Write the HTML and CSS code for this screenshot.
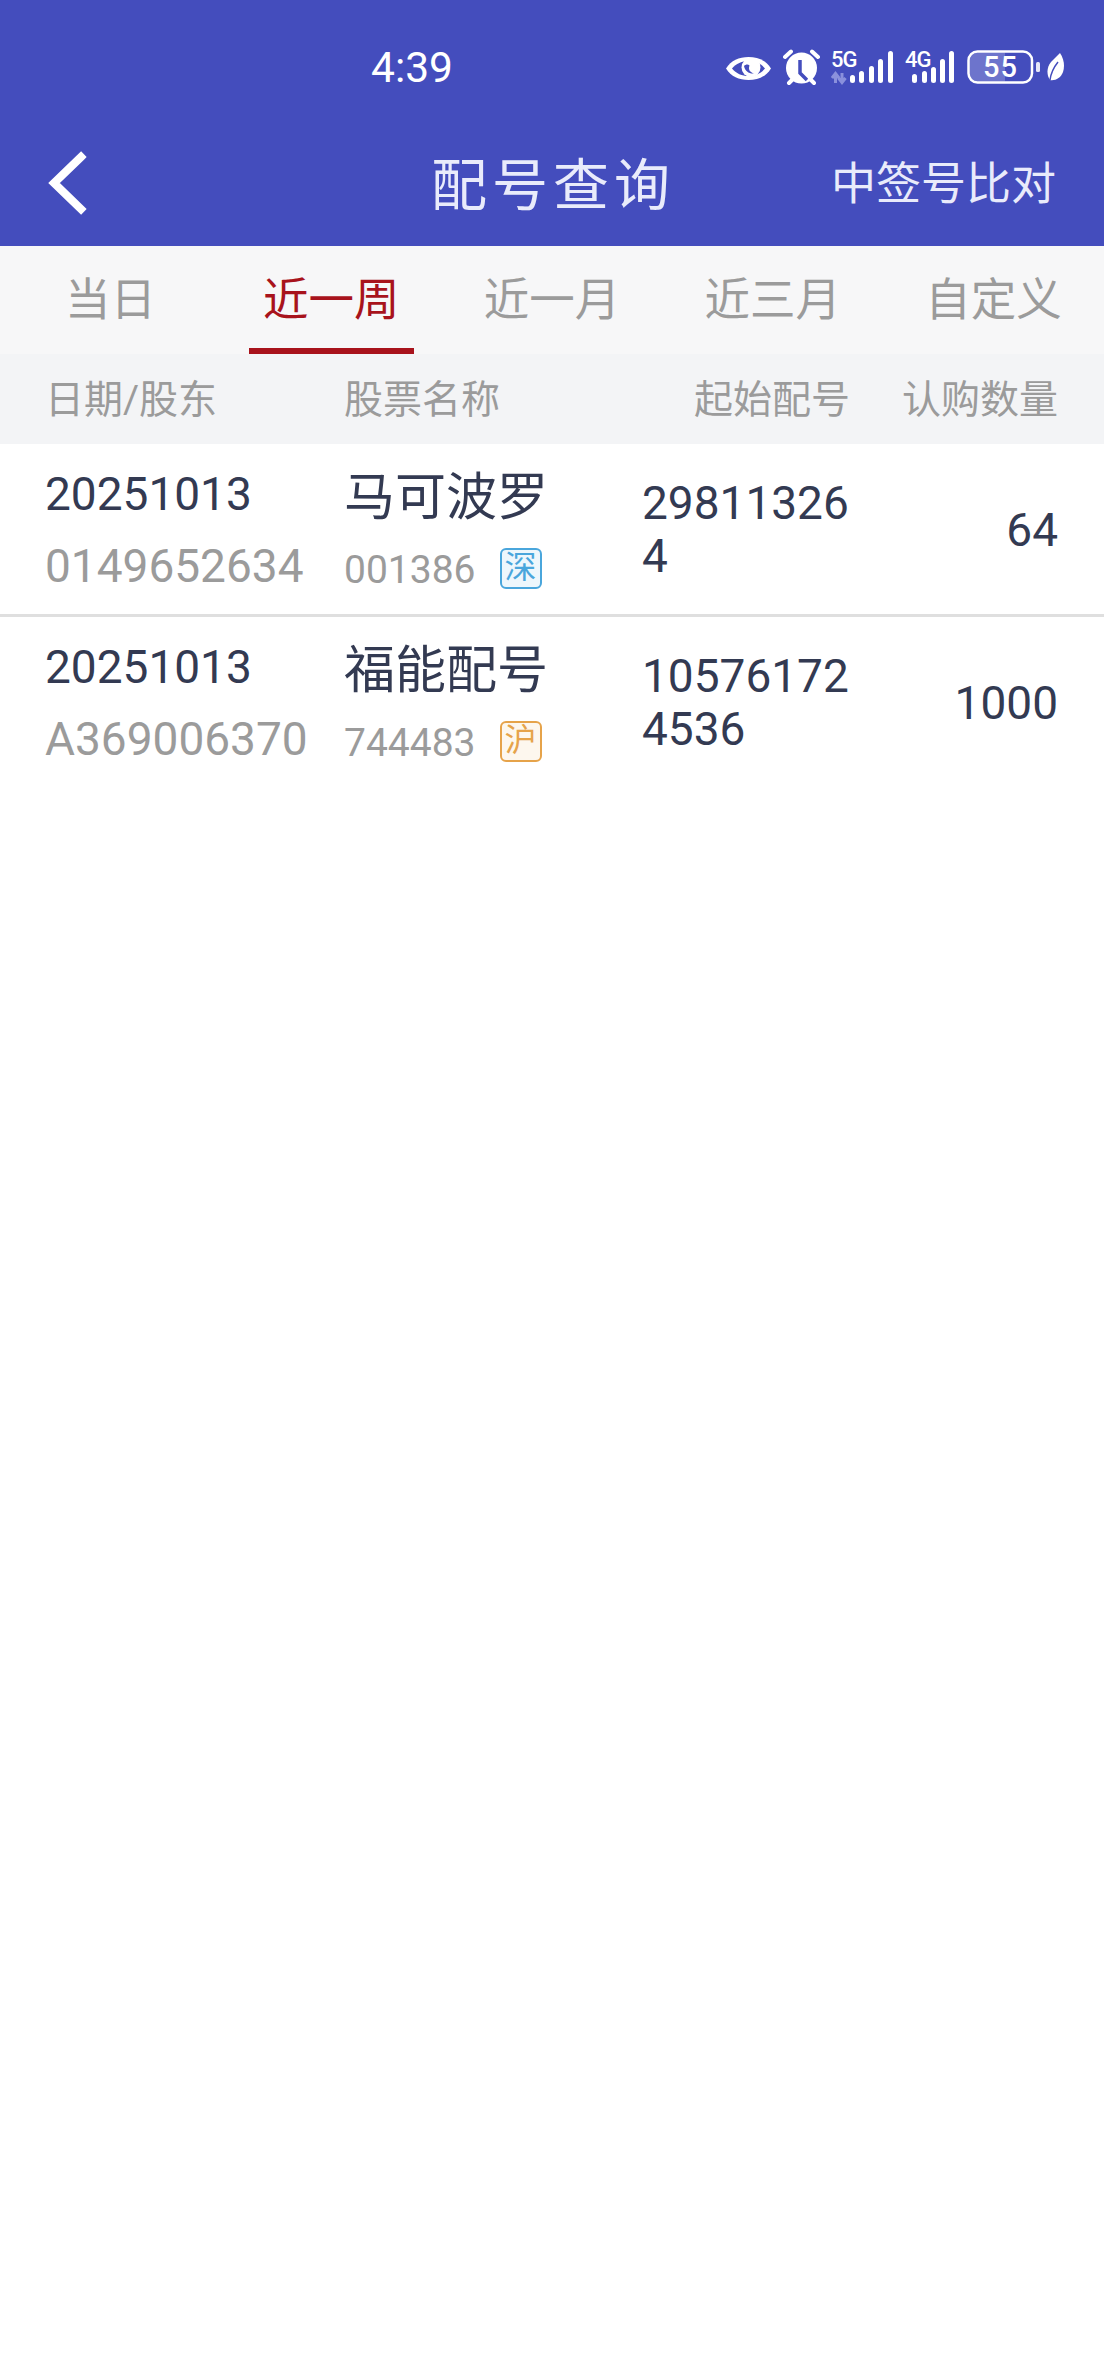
FILE: index.html
```html
<!DOCTYPE html>
<html lang="zh-CN">
<head>
<meta charset="UTF-8">
<title>配号查询</title>
<link rel="stylesheet" href="styles.css">
</head>
<body>
<div class="topbar">
	<div class="status">
		<span class="time">4:39</span>
		<div class="status_icons">
			<svg class="ico" width="47" height="46" viewBox="725 44 47 46">
				<path d="M726 68.5C731 60.5 739 57 748.5 57S766 60.5 771 68.5C766 76.5 758 80 748.5 80S731 76.5 726 68.5Z" fill="#fff"/>
				<path d="M732 68.5C736 63.5 742 61 748.5 61S761 63.5 765 68.5C761 73.5 755 76 748.5 76S736 73.5 732 68.5Z" fill="#444dbd"/>
				<circle cx="751" cy="67.5" r="9.5" fill="#fff"/>
				<path d="M744 66C745 71 749 74 754 73.5C750 72 748 70 749.5 65.5C748 64 745.5 64.5 744 66Z" fill="#444dbd"/>
			</svg>
			<svg class="ico" width="37" height="46" viewBox="783 44 37 46">
				<circle cx="801.5" cy="68" r="15.5" fill="#fff"/>
				<path d="M800 60V73L807 80" fill="none" stroke="#444dbd" stroke-width="3.5"/>
				<path d="M785 57L791 51.5M812 51.5L818 57M789 83L793 79M814 83L810 79" fill="none" stroke="#fff" stroke-width="4" stroke-linecap="round"/>
			</svg>
			<svg class="ico" width="62" height="46" viewBox="831 44 62 46">
				<text class="net_txt" x="831" y="67">5G</text>
				<path d="M835.5 83V75M832 78L835.5 73.500L839 78M842 73V81M838.500 78L842 82.500L845.500 78" fill="none" stroke="#8a90dc" stroke-width="3"/>
				<rect x="850" y="75" width="5" height="8" rx="2.5" fill="#fff"/>
				<rect x="859" y="71" width="5" height="12" rx="2.5" fill="#fff"/>
				<rect x="869" y="66" width="5" height="17" rx="2.5" fill="#fff"/>
				<rect x="878" y="59" width="5" height="24" rx="2.5" fill="#fff"/>
				<rect x="888" y="51" width="5" height="32" rx="2.5" fill="#fff"/>
			</svg>
			<svg class="ico net4g" width="49" height="46" viewBox="905 44 49 46">
				<text class="net_txt" x="905" y="67">4G</text>
				<rect x="912" y="74" width="5" height="9" rx="2.5" fill="#fff"/>
				<rect x="922" y="71" width="5" height="12" rx="2.5" fill="#fff"/>
				<rect x="931" y="67" width="5" height="16" rx="2.5" fill="#fff"/>
				<rect x="940" y="59" width="5" height="24" rx="2.5" fill="#fff"/>
				<rect x="949" y="51" width="5" height="32" rx="2.5" fill="#fff"/>
			</svg>
			<svg class="ico batt" width="73" height="46" viewBox="967 44 73 46">
				<path d="M978 52.5H1005V81.5H978A8.500 8.500 0 0 1 969.500 73V61A8.500 8.500 0 0 1 978 52.5Z" fill="#6d74cc"/>
				<rect x="968.500" y="51.500" width="63.500" height="31" rx="9" fill="none" stroke="#fff" stroke-width="2.500"/>
				<text class="batt_txt" x="983" y="77">55</text>
				<rect x="1036" y="62" width="4" height="10" rx="1.500" fill="#e6e7f7"/>
			</svg>
			<svg class="ico leaf" width="18" height="46" viewBox="1047 44 18 46">
				<path d="M1060 53C1064 59 1065 66 1063 72C1061 78 1055 81 1050 80C1046 74 1047 67 1051 62C1054 59 1057 56 1060 53Z" fill="#fff"/>
				<path d="M1050 80C1051 72 1054 67 1058 62" fill="none" stroke="#444dbd" stroke-width="1.500"/>
			</svg>
		</div>
	</div>
	<div class="nav">
		<svg class="back" width="44" height="66" viewBox="45 150 44 66">
			<path d="M81 157L54 183L81 209" fill="none" stroke="#fff" stroke-width="8" stroke-linecap="square"/>
		</svg>
		<span class="title">配号查询</span>
		<span class="nav_btn">中签号比对</span>
	</div>
</div>

<div class="tabs">
	<div class="tab"><span>当日</span></div>
	<div class="tab active"><span>近一周</span></div>
	<div class="tab"><span>近一月</span></div>
	<div class="tab"><span>近三月</span></div>
	<div class="tab"><span>自定义</span></div>
</div>

<div class="row_grid head">
	<div>日期/股东</div>
	<div>股票名称</div>
	<div class="right">起始配号</div>
	<div class="right">认购数量</div>
</div>

<div class="row_grid item">
	<div class="stack">
		<div>20251013</div>
		<div class="sub">0149652634</div>
	</div>
	<div class="stack col_name">
		<div class="name">马可波罗</div>
		<div class="code_line">
			<span class="code">001386</span>
			<span class="tag sz">深</span>
		</div>
	</div>
	<div class="peihao">298113264</div>
	<div class="right">64</div>
</div>
<div class="row_grid item">
	<div class="stack">
		<div>20251013</div>
		<div class="sub">A369006370</div>
	</div>
	<div class="stack col_name">
		<div class="name">福能配号</div>
		<div class="code_line">
			<span class="code">744483</span>
			<span class="tag sh">沪</span>
		</div>
	</div>
	<div class="peihao">105761724536</div>
	<div class="right">1000</div>
</div>
</body>
</html>
```

FILE: styles.css
```css
body {
	margin: 0;
	min-height: 2376px;
	background-color: #ffffff;
	font-family: Roboto, "Noto Sans CJK SC", sans-serif;
	color: #333a52;
}
.topbar {
	background-color: #444dbd;
	height: 246px;
	color: #ffffff;
}
.status {
	display: flex;
	justify-content: space-between;
	align-items: center;
	box-sizing: border-box;
	height: 120px;
	padding: 14px 39px 0 371px;
}
.time {
	font-size: 42.5px;
}
.status_icons {
	display: flex;
	gap: 11px;
}
.ico {
	display: block;
}
.net4g {
	margin-left: 1px;
}
.batt {
	margin-left: 2px;
}
.leaf {
	margin-left: -4px;
}
.net_txt {
	font-size: 22px;
	font-weight: 500;
	letter-spacing: -1px;
	fill: #ffffff;
}
.batt_txt {
	font-size: 29px;
	font-weight: 500;
	letter-spacing: 1px;
	fill: #ffffff;
}
.nav {
	display: grid;
	grid-template-columns: 1fr auto 1fr;
	align-items: center;
	height: 126px;
	padding: 0 48px 0 45px;
}
.back {
	display: block;
}
.title {
	padding-left: 5px;
	font-size: 56px;
	letter-spacing: 5px;
	color: #e9ebfb;
	margin-bottom: 6px;
}
.nav_btn {
	justify-self: end;
	font-size: 45px;
	color: #e9ebfb;
	margin-bottom: 6px;
}
.tabs {
	display: flex;
	height: 108px;
	background-color: #f7f7f8;
}
.tab {
	flex: 1;
	display: flex;
	justify-content: center;
	font-size: 45.5px;
	color: #9b9b9b;
}
.tab span {
	box-sizing: border-box;
	width: 165px;
	height: 108px;
	line-height: 98px;
	border-top: 6px solid transparent;
	border-bottom: 6px solid transparent;
	text-align: center;
}
.tab.active {
	color: #a8131c;
}
.tab.active span {
	border-bottom-color: #a8131c;
}
.row_grid {
	display: grid;
	grid-template-columns: 299px 298px 208px 1fr;
	align-items: center;
	padding: 0 46px 0 45px;
}
.head {
	box-sizing: border-box;
	height: 90px;
	padding-bottom: 6px;
	background-color: #f3f4f6;
	font-size: 39px;
	color: #9b9b9b;
}
.right {
	text-align: right;
}
.item {
	box-sizing: border-box;
	height: 173px;
	padding-top: 2px;
	border-bottom: 3px solid #dfdfdf;
	font-size: 46px;
}
.item:last-child {
	border-bottom-color: transparent;
}
.stack {
	line-height: 72px;
}
.col_name {
	margin-top: 8px;
}
.sub {
	color: #9b9b9b;
}
.name {
	font-size: 51px;
}
.code_line {
	display: flex;
	align-items: center;
	height: 73px;
}
.code {
	font-size: 39px;
	color: #9b9b9b;
}
.tag {
	box-sizing: border-box;
	width: 42px;
	height: 41px;
	margin: -4px 0 0 24px;
	border: 2px solid;
	border-radius: 6px;
	font-size: 32px;
	line-height: 35px;
	text-align: center;
}
.tag.sz {
	color: #4aa6dc;
	background-color: #eef7fc;
}
.tag.sh {
	color: #e6a34a;
	background-color: #fdf7ee;
}
.peihao {
	line-height: 53px;
	word-break: break-all;
}
```
